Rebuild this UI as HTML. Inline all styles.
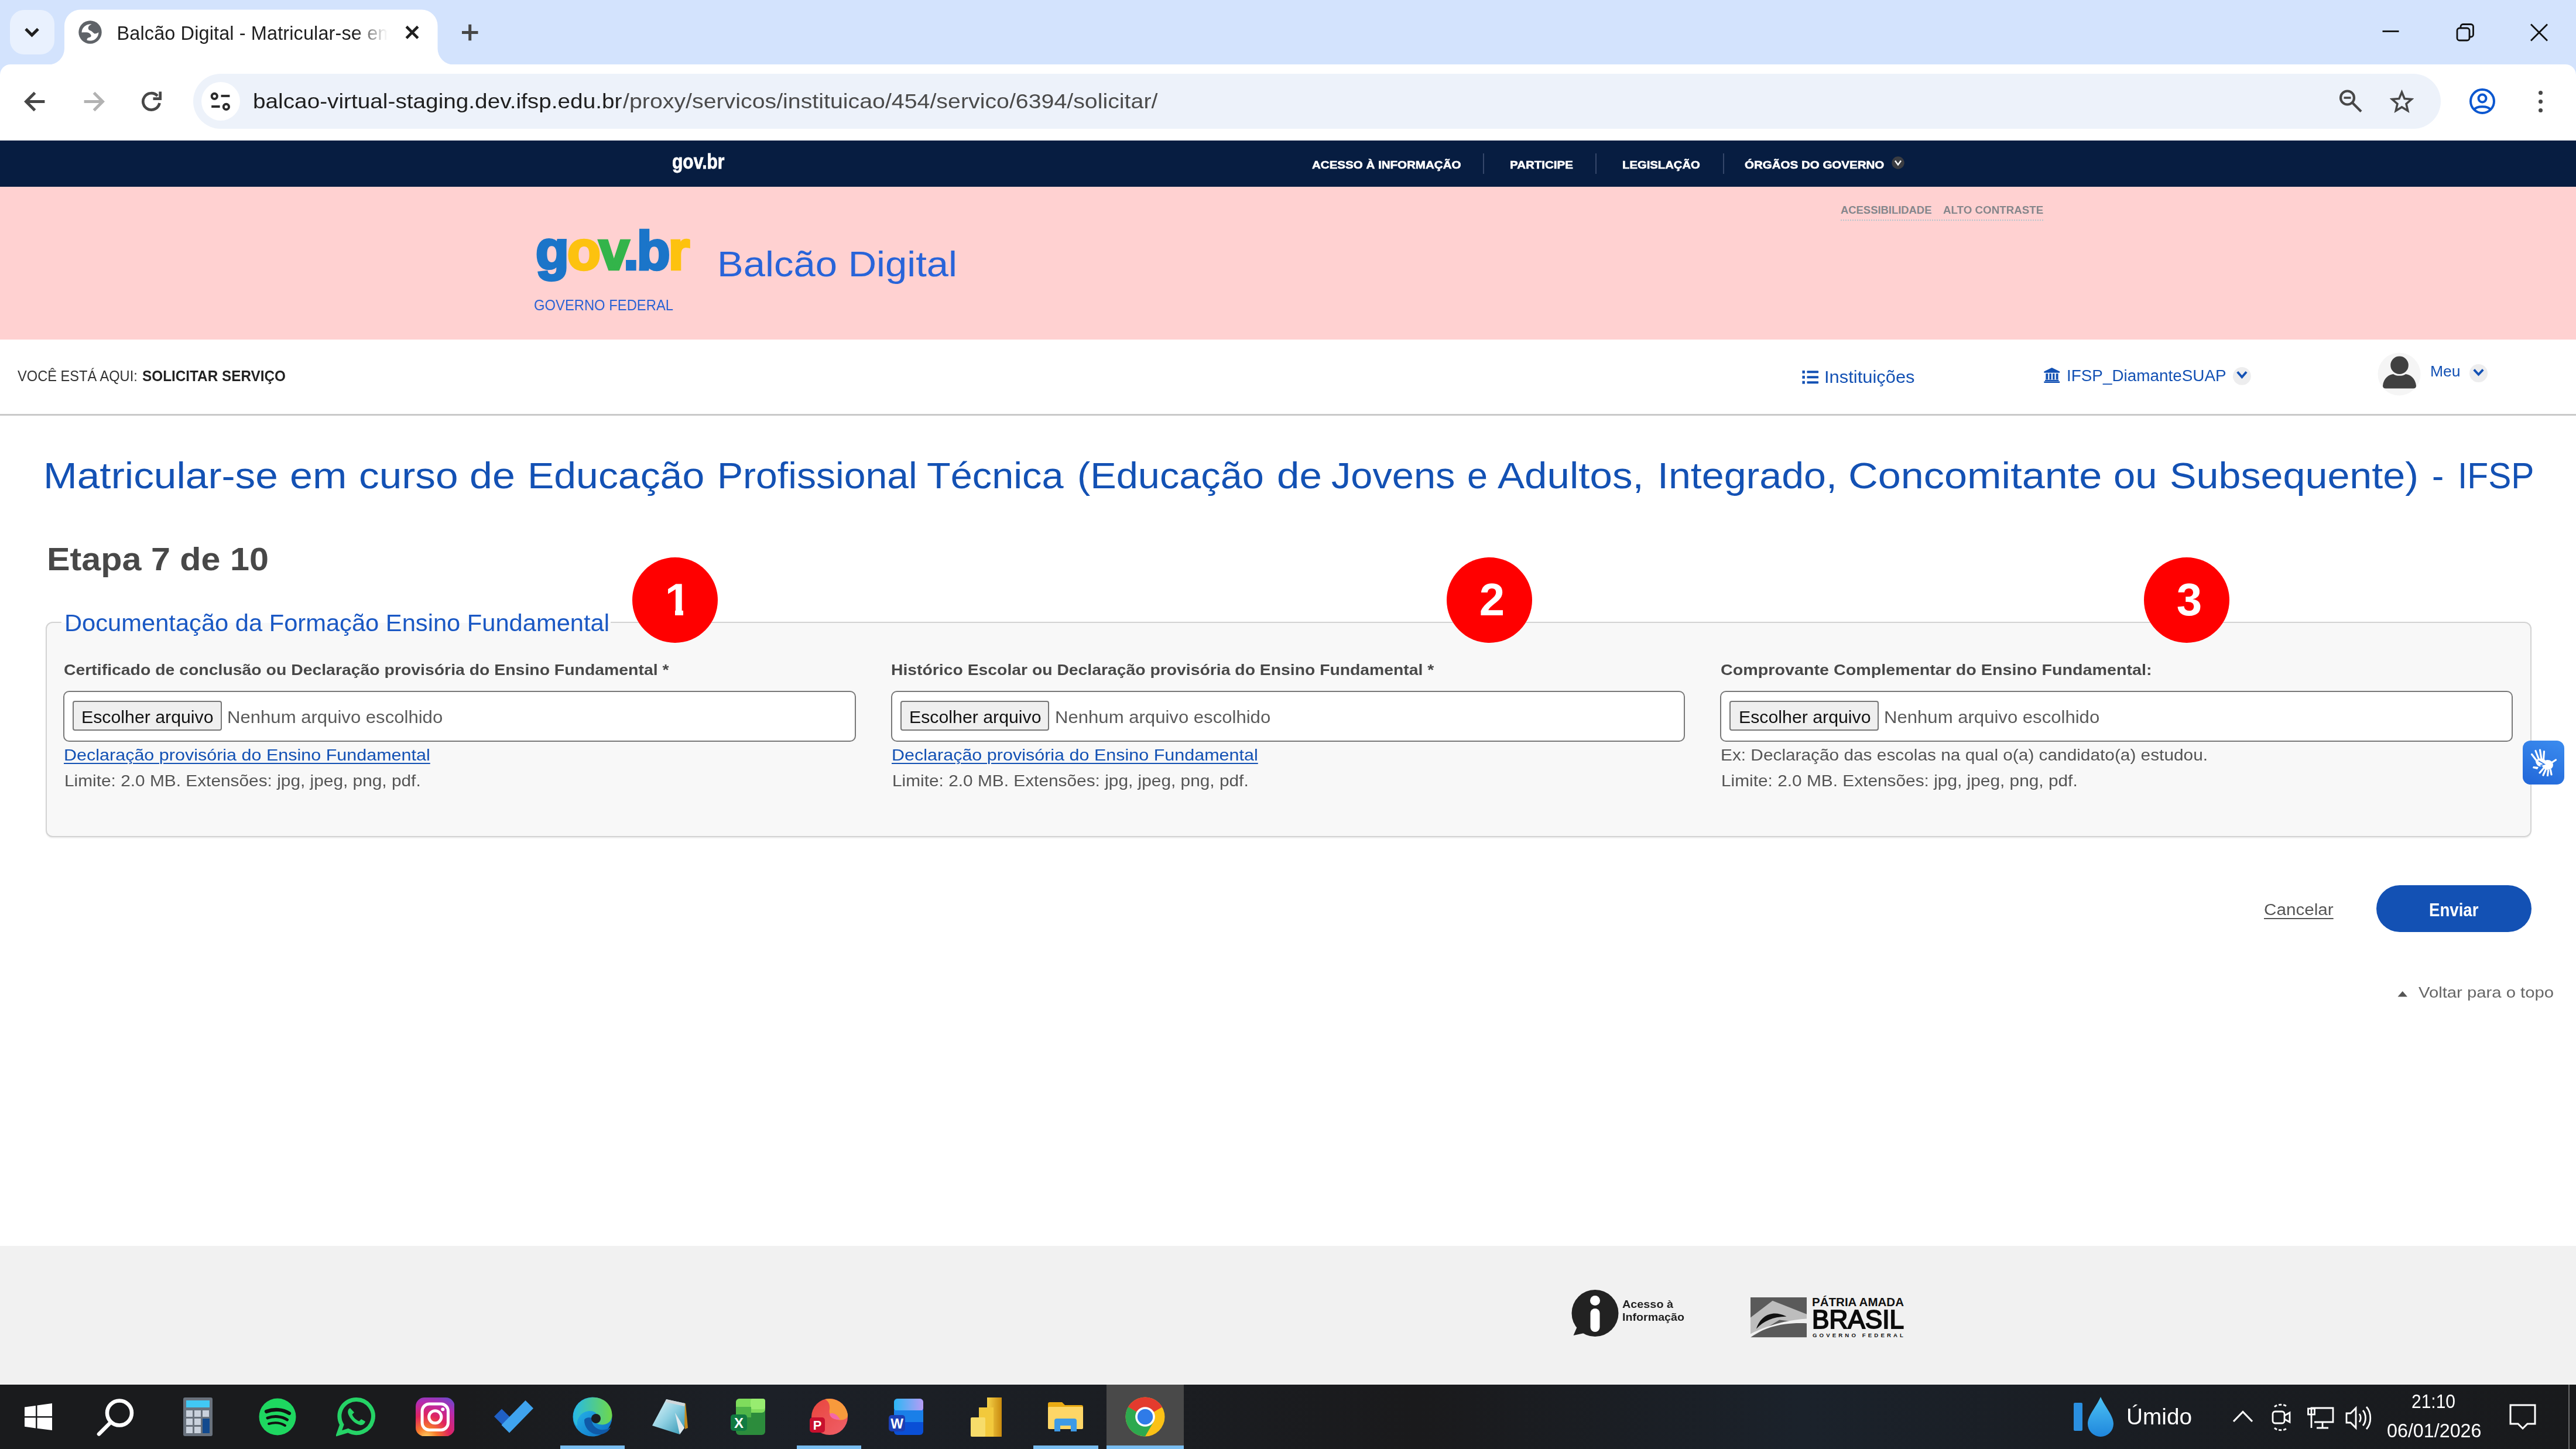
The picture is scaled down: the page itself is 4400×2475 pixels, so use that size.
<!DOCTYPE html>
<html lang="pt-BR"><head><meta charset="utf-8"><title>Balcão Digital - Matricular-se em curso</title>
<style>
html,body{margin:0;padding:0}
body{width:4400px;height:2475px;position:relative;overflow:hidden;background:#fff;font-family:"Liberation Sans",sans-serif}
.r,.a,.t{position:absolute;display:block}
.t{white-space:nowrap;line-height:1}
</style></head>
<body>
<!-- page -->
<div class="r" style="left:0px;top:240px;width:4400px;height:2124px;background:#fff;"></div>
<div class="r" style="left:0px;top:240px;width:4400px;height:78.5px;background:#071d41;"></div>
<span class="t" style="left:1148.0px;top:258.2px;font-size:35px;font-weight:700;color:#fff;transform-origin:0 0;transform:scaleX(0.8577);-webkit-text-stroke:0.8px #fff;">gov.br</span>
<span class="t" style="left:2241.0px;top:272.6px;font-size:18.8px;font-weight:700;color:#fff;transform-origin:0 0;transform:scaleX(1.0935);-webkit-text-stroke:0.6px #fff;">ACESSO À INFORMAÇÃO</span>
<span class="t" style="left:2579.0px;top:272.6px;font-size:18.8px;font-weight:700;color:#fff;transform-origin:0 0;transform:scaleX(1.0922);-webkit-text-stroke:0.6px #fff;">PARTICIPE</span>
<span class="t" style="left:2771.0px;top:272.6px;font-size:18.8px;font-weight:700;color:#fff;transform-origin:0 0;transform:scaleX(1.0791);-webkit-text-stroke:0.6px #fff;">LEGISLAÇÃO</span>
<span class="t" style="left:2980.0px;top:272.6px;font-size:18.8px;font-weight:700;color:#fff;transform-origin:0 0;transform:scaleX(1.0925);-webkit-text-stroke:0.6px #fff;">ÓRGÃOS DO GOVERNO</span>
<div class="r" style="left:2533px;top:261.5px;width:2px;height:35.0px;background:#35476a;"></div>
<div class="r" style="left:2725px;top:261.5px;width:2px;height:35.0px;background:#35476a;"></div>
<div class="r" style="left:2942.5px;top:261.5px;width:2.0px;height:35.0px;background:#35476a;"></div>
<svg class="a" style="left:3231.2px;top:266.7px" width="22" height="22" viewBox="0 0 22 22"><circle cx="11" cy="11" r="10.700" fill="#3b3d42"/><path d="M6 7.500 L11 14.500 L16 7.500" fill="none" stroke="#fff" stroke-width="2.400"/></svg>
<div class="r" style="left:0px;top:318.5px;width:4400px;height:261.5px;background:#ffd1d1;"></div>
<span class="t" style="left:3144.0px;top:349.9px;font-size:18.4px;font-weight:700;color:#85868b;letter-spacing:0.008px;">ACESSIBILIDADE</span>
<span class="t" style="left:3318.6px;top:349.9px;font-size:18.4px;font-weight:700;color:#85868b;transform-origin:0 0;transform:scaleX(1.0203);">ALTO CONTRASTE</span>
<div class="a" style="left:3144px;top:374.5px;width:346px;height:0;border-top:2.5px dotted #b5c5cd"></div>
<span class="t" style="left:915px;top:381.9px;font-size:93px;font-weight:700;letter-spacing:-2.86px;-webkit-text-stroke:4.5px currentColor"><span style="color:#1b75c9">g</span><span style="color:#fdc20f">o</span><span style="color:#33b44a">v</span><span style="color:#1b75c9">.</span><span style="color:#1b75c9">b</span><span style="color:#fdc20f">r</span></span>
<span class="t" style="left:912.0px;top:509.4px;font-size:25.5px;color:#2a62d4;transform-origin:0 0;transform:scaleX(0.9331);">GOVERNO FEDERAL</span>
<span class="t" style="left:1225.0px;top:420.0px;font-size:62px;color:#2864d9;transform-origin:0 0;transform:scaleX(1.0815);">Balcão Digital</span>
<div class="r" style="left:0px;top:706.5px;width:4400px;height:3.0px;background:#c9c9c9;"></div>
<span class="t" style="left:30.4px;top:629.7px;font-size:25px;color:#333;transform-origin:0 0;transform:scaleX(0.9450);">VOCÊ ESTÁ AQUI:</span>
<span class="t" style="left:243.0px;top:629.7px;font-size:25px;font-weight:700;color:#222;transform-origin:0 0;transform:scaleX(0.9727);">SOLICITAR SERVIÇO</span>
<svg class="a" style="left:3077px;top:632px" width="30.5" height="25" viewBox="0 0 31 28"><g fill="#1351b4"><rect x="0" y="1" width="5" height="5.500"/><rect x="0" y="11" width="5" height="5.500"/><rect x="0" y="21" width="5" height="5.500"/><rect x="9" y="1.500" width="22" height="4.500" rx="1"/><rect x="9" y="11.500" width="22" height="4.500" rx="1"/><rect x="9" y="21.500" width="22" height="4.500" rx="1"/></g></svg>
<span class="t" style="left:3116.0px;top:628.7px;font-size:29.5px;color:#1351b4;transform-origin:0 0;transform:scaleX(1.0469);">Instituições</span>
<svg class="a" style="left:3489.5px;top:628px" width="29.5" height="26" viewBox="0 0 31 30"><g fill="#1351b4"><path d="M15.500 0 L31 7.500 V10 H0 V7.500 Z"/><rect x="3.500" y="11.500" width="4.500" height="12"/><rect x="10.500" y="11.500" width="4" height="12"/><rect x="17" y="11.500" width="4" height="12"/><rect x="23.500" y="11.500" width="4.500" height="12"/><rect x="2" y="24" width="27" height="2.500"/><rect x="0" y="27" width="31" height="3"/></g></svg>
<span class="t" style="left:3529.6px;top:627.4px;font-size:28.2px;color:#1351b4;transform-origin:0 0;transform:scaleX(0.9889);">IFSP_DiamanteSUAP</span>
<svg class="a" style="left:3814.1px;top:627px" width="30.8" height="30.8" viewBox="0 0 30 30"><circle cx="15" cy="15" r="15" fill="#ededee"/><path d="M7.500 8 L15 16.500 L22.500 8" fill="none" stroke="#1351b4" stroke-width="3.800"/></svg>
<svg class="a" style="left:4061.3px;top:601.5px" width="74" height="74" viewBox="0 0 74 74"><circle cx="37" cy="37" r="36.5" fill="#f5f5f5"/><circle cx="37.5" cy="21.8" r="15.3" fill="#404040"/><path d="M9 57 C10 44 20 37.500 27 37 C32 40.800 43 40.800 48 37 C55 37.500 65 44 66 57 C66 60 64 61.500 61 61.500 H14 C11 61.500 9 60 9 57 Z" fill="#404040"/></svg>
<span class="t" style="left:4150.8px;top:621.1px;font-size:26.4px;color:#1351b4;transform-origin:0 0;transform:scaleX(1.0047);">Meu</span>
<svg class="a" style="left:4218px;top:622.3px" width="31" height="31" viewBox="0 0 28 28"><circle cx="14" cy="14" r="14" fill="#ededee"/><path d="M7 8.500 L14 16 L21 8.500" fill="none" stroke="#1351b4" stroke-width="3.500"/></svg>
<h1 class="a" style="left:74.1px;top:781.2px;margin:0;font-size:0;font-weight:400;color:#1351b4;line-height:0;white-space:nowrap"><span style="display:inline-block;width:421.4px;font-size:63.8px;line-height:1;transform-origin:0 0;transform:scaleX(1.0873)">Matricular-se</span> <span style="display:inline-block;width:117.5px;font-size:63.8px;line-height:1;transform-origin:0 0;transform:scaleX(1.0989)">em</span> <span style="display:inline-block;width:189.0px;font-size:63.8px;line-height:1;transform-origin:0 0;transform:scaleX(1.0864)">curso</span> <span style="display:inline-block;width:99.5px;font-size:63.8px;line-height:1;transform-origin:0 0;transform:scaleX(1.0963)">de</span> <span style="display:inline-block;width:323.5px;font-size:63.8px;line-height:1;transform-origin:0 0;transform:scaleX(1.0649)">Educação</span> <span style="display:inline-block;width:358.0px;font-size:63.8px;line-height:1;transform-origin:0 0;transform:scaleX(1.0361)">Profissional</span> <span style="display:inline-block;width:257.3px;font-size:63.8px;line-height:1;transform-origin:0 0;transform:scaleX(1.0452)">Técnica</span> <span style="display:inline-block;width:340.3px;font-size:63.8px;line-height:1;transform-origin:0 0;transform:scaleX(1.0455)">(Educação</span> <span style="display:inline-block;width:93.9px;font-size:63.8px;line-height:1;transform-origin:0 0;transform:scaleX(1.0822)">de</span> <span style="display:inline-block;width:231.9px;font-size:63.8px;line-height:1;transform-origin:0 0;transform:scaleX(1.0458)">Jovens</span> <span style="display:inline-block;width:52.1px;font-size:63.8px;line-height:1;transform-origin:0 0;transform:scaleX(0.9864)">e</span> <span style="display:inline-block;width:272.5px;font-size:63.8px;line-height:1;transform-origin:0 0;transform:scaleX(1.0831)">Adultos,</span> <span style="display:inline-block;width:326.1px;font-size:63.8px;line-height:1;transform-origin:0 0;transform:scaleX(1.0681)">Integrado,</span> <span style="display:inline-block;width:453.2px;font-size:63.8px;line-height:1;transform-origin:0 0;transform:scaleX(1.1010)">Concomitante</span> <span style="display:inline-block;width:95.7px;font-size:63.8px;line-height:1;transform-origin:0 0;transform:scaleX(1.0498)">ou</span> <span style="display:inline-block;width:448.3px;font-size:63.8px;line-height:1;transform-origin:0 0;transform:scaleX(1.0697)">Subsequente)</span> <span style="display:inline-block;width:43.5px;font-size:63.8px;line-height:1;transform-origin:0 0;transform:scaleX(0.9507)">-</span> <span style="display:inline-block;width:130.5px;font-size:63.8px;line-height:1;transform-origin:0 0;transform:scaleX(0.9202)">IFSP</span></h1>
<span class="t" style="left:80.4px;top:926.6px;font-size:56.4px;font-weight:700;color:#484848;transform-origin:0 0;transform:scaleX(1.0512);">Etapa 7 de 10</span>
<div class="a" style="left:77.5px;top:1062px;width:4242px;height:363.5px;border:2px solid #d3d3d3;border-radius:12px;background:#f8f8f8;box-shadow:0 1.5px 2px rgba(0,0,0,.06)"></div>
<div class="r" style="left:105px;top:1058px;width:938px;height:8px;background:#fff;"></div>
<div class="r" style="left:105px;top:1064px;width:938px;height:4px;background:#f8f8f8;"></div>
<span class="t" style="left:109.7px;top:1043.6px;font-size:40px;color:#1a58c4;transform-origin:0 0;transform:scaleX(1.0416);">Documentação da Formação Ensino Fundamental</span>
<span class="t" style="left:108.5px;top:1130.6px;font-size:26.2px;font-weight:700;color:#484848;transform-origin:0 0;transform:scaleX(1.0843);">Certificado de conclusão ou Declaração provisória do Ensino Fundamental *</span>
<div class="a" style="left:107.7px;top:1180px;width:1350.3px;height:83px;border:2px solid #787878;border-radius:10px;background:#fff"></div>
<div class="a" style="left:124.0px;top:1196.6px;width:250.6px;height:47.4px;border:2px solid #767676;border-radius:4px;background:#efefef"></div>
<span class="t" style="left:139.4px;top:1209.6px;font-size:29.6px;color:#111;transform-origin:0 0;transform:scaleX(1.0232);">Escolher arquivo</span>
<span class="t" style="left:388.0px;top:1209.6px;font-size:29.6px;color:#5a5a5a;transform-origin:0 0;transform:scaleX(1.0508);">Nenhum arquivo escolhido</span>
<span class="t" style="left:108.8px;top:1276.0px;font-size:27.5px;color:#1351b4;transform-origin:0 0;transform:scaleX(1.1094);text-decoration:underline;text-decoration-thickness:2px;text-underline-offset:4px;">Declaração provisória do Ensino Fundamental</span>
<span class="t" style="left:109.6px;top:1320.3px;font-size:27.5px;color:#555;transform-origin:0 0;transform:scaleX(1.0850);">Limite: 2.0 MB. Extensões: jpg, jpeg, png, pdf.</span>
<span class="t" style="left:1522.4px;top:1130.6px;font-size:26.2px;font-weight:700;color:#484848;transform-origin:0 0;transform:scaleX(1.0819);">Histórico Escolar ou Declaração provisória do Ensino Fundamental *</span>
<div class="a" style="left:1521.6px;top:1180px;width:1352.4px;height:83px;border:2px solid #787878;border-radius:10px;background:#fff"></div>
<div class="a" style="left:1537.9px;top:1196.6px;width:250.6px;height:47.4px;border:2px solid #767676;border-radius:4px;background:#efefef"></div>
<span class="t" style="left:1553.3px;top:1209.6px;font-size:29.6px;color:#111;transform-origin:0 0;transform:scaleX(1.0232);">Escolher arquivo</span>
<span class="t" style="left:1801.9px;top:1209.6px;font-size:29.6px;color:#5a5a5a;transform-origin:0 0;transform:scaleX(1.0508);">Nenhum arquivo escolhido</span>
<span class="t" style="left:1522.7px;top:1276.0px;font-size:27.5px;color:#1351b4;transform-origin:0 0;transform:scaleX(1.1094);text-decoration:underline;text-decoration-thickness:2px;text-underline-offset:4px;">Declaração provisória do Ensino Fundamental</span>
<span class="t" style="left:1523.5px;top:1320.3px;font-size:27.5px;color:#555;transform-origin:0 0;transform:scaleX(1.0850);">Limite: 2.0 MB. Extensões: jpg, jpeg, png, pdf.</span>
<span class="t" style="left:2938.7px;top:1130.6px;font-size:26.2px;font-weight:700;color:#484848;transform-origin:0 0;transform:scaleX(1.0958);">Comprovante Complementar do Ensino Fundamental:</span>
<div class="a" style="left:2937.9px;top:1180px;width:1350.6px;height:83px;border:2px solid #787878;border-radius:10px;background:#fff"></div>
<div class="a" style="left:2954.2px;top:1196.6px;width:250.6px;height:47.4px;border:2px solid #767676;border-radius:4px;background:#efefef"></div>
<span class="t" style="left:2969.6px;top:1209.6px;font-size:29.6px;color:#111;transform-origin:0 0;transform:scaleX(1.0232);">Escolher arquivo</span>
<span class="t" style="left:3218.2px;top:1209.6px;font-size:29.6px;color:#5a5a5a;transform-origin:0 0;transform:scaleX(1.0508);">Nenhum arquivo escolhido</span>
<span class="t" style="left:2939.0px;top:1276.0px;font-size:27.5px;color:#555;transform-origin:0 0;transform:scaleX(1.0842);">Ex: Declaração das escolas na qual o(a) candidato(a) estudou.</span>
<span class="t" style="left:2939.8px;top:1320.3px;font-size:27.5px;color:#555;transform-origin:0 0;transform:scaleX(1.0850);">Limite: 2.0 MB. Extensões: jpg, jpeg, png, pdf.</span>
<div class="a" style="left:1080px;top:952px;width:146px;height:146px;border-radius:50%;background:#ff0000"></div>
<span class="t" style="left:1135.8px;top:985.0px;font-size:78px;font-weight:700;color:#fff;">1</span>
<div class="r" style="left:1139px;top:1041.5px;width:14.299999999999955px;height:11.5px;background:#ff0000;"></div>
<div class="r" style="left:1167.3px;top:1041.5px;width:11.700000000000045px;height:11.5px;background:#ff0000;"></div>
<div class="a" style="left:2471px;top:952px;width:146px;height:146px;border-radius:50%;background:#ff0000"></div>
<span class="t" style="left:2526.8px;top:985.0px;font-size:78px;font-weight:700;color:#fff;">2</span>
<div class="a" style="left:3662px;top:952px;width:146px;height:146px;border-radius:50%;background:#ff0000"></div>
<span class="t" style="left:3717.8px;top:985.0px;font-size:78px;font-weight:700;color:#fff;">3</span>
<div class="a" style="left:4309.3px;top:1264.5px;width:71.2px;height:75px;border-radius:13px;background:linear-gradient(200deg,#3b8cef,#2166d8)"></div>
<svg class="a" style="left:4322px;top:1279px" width="45" height="47" viewBox="0 0 45 47"><g stroke="#fff" stroke-width="3.200" stroke-linecap="round" fill="none"><path d="M12 22 L2.500 9.500 M15 19 L9 3.500 M19 18 L16.500 2 M22.500 19 L23.500 4.500"/><path d="M22 34 L16 41 M26 36 L22 45 M30.500 37 L29.500 46 M34.500 36 L36 44 M36 24 L43.500 19"/></g><g fill="#fff"><path d="M9 20 C12 16 22 15 25 19 L25 25 L18 30 C13 31 9 26 9 20 Z"/><ellipse cx="29.500" cy="27.500" rx="9.500" ry="8.500"/><path d="M5 30 L14 31 L12 35 L4 33 Z"/></g><path d="M14 20.500 L24 26.500 L17 28.500" stroke="#2f7ae6" stroke-width="1.800" fill="none"/></svg>
<span class="t" style="left:3867.0px;top:1539.1px;font-size:28.2px;color:#555;transform-origin:0 0;transform:scaleX(1.0518);text-decoration:underline;text-decoration-thickness:2px;text-underline-offset:4.5px;">Cancelar</span>
<div class="r" style="left:4059px;top:1512px;width:264.60000000000036px;height:80px;background:#1351b4;border-radius:40px;"></div>
<span class="t" style="left:4149.0px;top:1539.2px;font-size:30.5px;font-weight:700;color:#fff;transform-origin:0 0;transform:scaleX(0.9062);">Enviar</span>
<svg class="a" style="left:4094.5px;top:1693px" width="17.5" height="9.5" viewBox="0 0 19 11"><path d="M0 11 L9.500 0 L19 11 Z" fill="#555"/></svg>
<span class="t" style="left:4131.0px;top:1683.1px;font-size:25.5px;color:#666;transform-origin:0 0;transform:scaleX(1.1474);">Voltar para o topo</span>
<div class="r" style="left:0px;top:2128px;width:4400px;height:236px;background:#f1f1f1;"></div>
<svg class="a" style="left:2682px;top:2202px" width="86" height="84" viewBox="0 0 86 84"><circle cx="42.500" cy="41" r="40" fill="#222"/><path d="M12 64 L5.500 79 L24 75 Z" fill="#222"/><circle cx="42.500" cy="19.500" r="8.500" fill="#fff"/><rect x="34.500" y="33" width="16" height="40" rx="8" fill="#fff"/></svg>
<span class="t" style="left:2770.6px;top:2220.2px;font-size:17.5px;font-weight:700;color:#222;transform-origin:0 0;transform:scaleX(1.1320);">Acesso à</span>
<span class="t" style="left:2770.6px;top:2242.2px;font-size:17.5px;font-weight:700;color:#222;transform-origin:0 0;transform:scaleX(1.1237);">Informação</span>
<svg class="a" style="left:2989.5px;top:2216.4px" width="96" height="68.2" viewBox="0 0 97 71" preserveAspectRatio="none"><rect width="97" height="71" fill="#5a5a5a"/><path d="M0 36 L38 6 L97 30 V46 L50 40 L0 71 Z" fill="#bdbdbd"/><path d="M10 56 C18 30 40 22 62 34 C40 34 22 42 10 56 Z" fill="#111"/><path d="M0 71 C25 52 60 44 97 46 V38 C60 40 25 52 0 65 Z" fill="#f1f1f1"/></svg>
<span class="t" style="left:3095.0px;top:2213.6px;font-size:20.5px;font-weight:700;color:#111;letter-spacing:0.020px;">PÁTRIA AMADA</span>
<span class="t" style="left:3095.0px;top:2232.7px;font-size:43.5px;color:#0c0c0c;transform-origin:0 0;transform:scaleX(1.0146);-webkit-text-stroke:2px #0c0c0c;">BRASIL</span>
<span class="t" style="left:3096.0px;top:2276.2px;font-size:9.6px;font-weight:700;color:#111;letter-spacing:4.137px;">GOVERNO FEDERAL</span>
<!-- chrome -->
<div class="r" style="left:0px;top:0px;width:4400px;height:132px;background:#d3e3fd;"></div>
<div class="r" style="left:16.5px;top:16.5px;width:76.5px;height:76.5px;background:#e9f1fe;border-radius:24px;"></div>
<svg class="a" style="left:36px;top:36px" width="38" height="38" viewBox="0 0 38 38"><path d="M8 13.5 L18.5 24 L29 13.5" fill="none" stroke="#1f1f1f" stroke-width="5"/></svg>
<div class="r" style="left:0px;top:110px;width:4400px;height:130px;background:#fff;border-radius:18px 18px 0 0;"></div>
<svg class="a" style="left:82px;top:16px" width="696" height="95" viewBox="82 16 696 95"><path d="M82.5 110.5 A27.5 27.5 0 0 0 110 83 V44 A27.5 27.5 0 0 1 137.5 16.5 H720 A27.5 27.5 0 0 1 747.5 44 V83 A27.5 27.5 0 0 0 775 110.5 Z" fill="#fff"/></svg>
<svg class="a" style="left:134.3px;top:34.8px" width="40" height="40" viewBox="0 0 40 40"><circle cx="20" cy="20" r="19.700" fill="#5f6368"/><path d="M22.400 6.400 C19.500 7.500 17.200 9 16.700 12.500 C16.500 15.500 18.500 17 21.500 17.800 C23.500 18.500 25 21.500 27.300 22.400 C30 23 32.500 21.500 34.400 20.300 C34.500 26 31 31 26.500 33.200 C22.500 35 17.500 34.800 14.500 33.500 C14 31 16 29.500 18.200 29 C21 28.500 22.300 27 21.500 25.300 C20.500 22.500 18 20.800 15.700 20.500 C12 20 8.500 20.300 5.600 20.500 C5.400 14 10.500 8.500 16 6.900 C18.500 6.200 20.500 6.100 22.400 6.400 Z" fill="#fff"/></svg>
<div class="a" style="left:199.5px;top:30px;width:462px;height:52px;overflow:hidden;-webkit-mask-image:linear-gradient(90deg,#000 0,#000 405px,transparent 462px);mask-image:linear-gradient(90deg,#000 0,#000 405px,transparent 462px)"><span class="t" style="left:0;top:10.8px;font-size:32.5px;color:#1f1f1f;letter-spacing:0.103px">Balcão Digital - Matricular-se em curso de Educação</span></div>
<svg class="a" style="left:689px;top:40px" width="30" height="30" viewBox="0 0 30 30"><path d="M5.200 5.500 L24.800 25.100 M24.800 5.500 L5.200 25.100" stroke="#1f1f1f" stroke-width="4.600" fill="none"/></svg>
<svg class="a" style="left:787px;top:40px" width="32" height="32" viewBox="0 0 32 32"><path d="M2 15.500 H29.500 M15.700 1.800 V29.300" stroke="#474747" stroke-width="5" fill="none"/></svg>
<svg class="a" style="left:4060px;top:30px" width="320" height="50" viewBox="0 0 320 50"><g fill="none" stroke="#111" stroke-width="2.800"><path d="M9.500 23.500 H37.500"/><rect x="137" y="18" width="21" height="21" rx="4"/><path d="M143 17 V15.500 a4 4 0 0 1 4 -4 H160.500 a4 4 0 0 1 4 4 V29 a4 4 0 0 1 -4 4 H159"/><path d="M263 11.500 L291 39.500 M291 11.500 L263 39.500"/></g></svg>
<svg class="a" style="left:39.1px;top:151.7px" width="43" height="43" viewBox="0 0 46 46"><path d="M40 23 H7 M22 7 L6 23 L22 39" fill="none" stroke="#474747" stroke-width="5.400"/></svg>
<svg class="a" style="left:138.1px;top:151.7px" width="43" height="43" viewBox="0 0 46 46"><path d="M6 23 H39 M24 7 L40 23 L24 39" fill="none" stroke="#b2b2b2" stroke-width="5.400"/></svg>
<svg class="a" style="left:236px;top:150px" width="46" height="46" viewBox="0 0 46 46"><g fill="none" stroke="#474747" stroke-width="4.700"><path d="M33 13.800 A14.200 14.200 0 1 0 36.500 26"/><path d="M25.500 18.600 H37.700 V6.500"/></g></svg>
<div class="r" style="left:330px;top:126px;width:3839px;height:94px;background:#edf2fa;border-radius:47px;"></div>
<div class="r" style="left:343.5px;top:140px;width:66.0px;height:66px;background:#fff;border-radius:33px;"></div>
<svg class="a" style="left:356px;top:152px" width="42" height="42" viewBox="0 0 42 42"><g fill="none" stroke="#2b2b2b" stroke-width="4"><circle cx="10.300" cy="12.300" r="4.600"/><path d="M21.500 11.900 H36.400"/><circle cx="30.400" cy="30.400" r="4.600"/><path d="M5.200 30 H19.600"/></g></svg>
<span class="t" style="left:432.0px;top:156.4px;font-size:35.8px;color:#1f1f1f;transform-origin:0 0;transform:scaleX(1.0826);">balcao-virtual-staging.dev.ifsp.edu.br</span>
<span class="t" style="left:1063.5px;top:156.4px;font-size:35.8px;color:#4b4b4b;transform-origin:0 0;transform:scaleX(1.0983);">/proxy/servicos/instituicao/454/servico/6394/solicitar/</span>
<svg class="a" style="left:3990px;top:148px" width="50" height="50" viewBox="0 0 50 50"><g fill="none" stroke="#474747" stroke-width="4.200"><circle cx="19.500" cy="19" r="11.500"/><path d="M28 27.500 L43 42.500"/><path d="M13.500 19 H25.500" stroke-width="3.600"/></g></svg>
<svg class="a" style="left:4082.4px;top:152.5px" width="41" height="41" viewBox="0 0 24 24"><path d="M12 2.600 L14.700 9.100 L21.700 9.700 L16.400 14.300 L18 21.200 L12 17.500 L6 21.200 L7.600 14.300 L2.300 9.700 L9.300 9.100 Z" fill="none" stroke="#474747" stroke-width="2.100" stroke-linejoin="miter"/></svg>
<svg class="a" style="left:4216px;top:149px" width="48" height="48" viewBox="0 0 48 48"><g fill="none" stroke="#0b57d0" stroke-width="4"><circle cx="24" cy="24" r="20"/><circle cx="24" cy="19" r="6.500"/><path d="M10.500 38 C14 31.500 34 31.500 37.500 38"/></g></svg>
<div class="r" style="left:4335.5px;top:154.5px;width:7.0px;height:7.0px;background:#474747;border-radius:4px;"></div>
<div class="r" style="left:4335.5px;top:169.7px;width:7.0px;height:7.0px;background:#474747;border-radius:4px;"></div>
<div class="r" style="left:4335.5px;top:184.9px;width:7.0px;height:7.0px;background:#474747;border-radius:4px;"></div>
<!-- taskbar -->
<div class="r" style="left:0px;top:2365px;width:4400px;height:110px;background:linear-gradient(90deg,#1a1b1d 0%,#1a1b1d 18%,#1c2027 30%,#1b1e23 42%,#1a1a1c 55%,#1b222b 70%,#1a1e24 80%,#191a1c 100%);"></div>
<div class="r" style="left:1889.5px;top:2365px;width:132.0px;height:110px;background:#494949;"></div>
<div class="r" style="left:957px;top:2469px;width:110px;height:6px;background:#79bdf0;"></div>
<div class="r" style="left:1360.5px;top:2469px;width:110.5px;height:6px;background:#79bdf0;"></div>
<div class="r" style="left:1765px;top:2469px;width:111px;height:6px;background:#79bdf0;"></div>
<div class="r" style="left:1889.5px;top:2469px;width:132.0px;height:6px;background:#79bdf0;"></div>
<svg class="a" style="left:42px;top:2397px" width="47" height="46" viewBox="0 0 47 46"><g fill="#fff"><path d="M0 6.500 L19 4 V22 H0 Z"/><path d="M21.500 3.600 L47 0 V22 H21.500 Z"/><path d="M0 24.500 H19 V42.500 L0 39.800 Z"/><path d="M21.500 24.500 H47 V46 L21.500 42.800 Z"/></g></svg>
<svg class="a" style="left:164px;top:2386px" width="68" height="68" viewBox="0 0 68 68"><g fill="none" stroke="#fff" stroke-width="6.500"><circle cx="40" cy="27.500" r="21"/><path d="M25.500 43 L5 63.500" stroke-linecap="round"/></g></svg>
<svg class="a" style="left:313px;top:2387px" width="50" height="66" viewBox="0 0 50 66"><rect x="0" y="0" width="50" height="66" rx="3" fill="#69727d"/><rect x="5" y="5" width="40" height="12" fill="#41c8f4"/><rect x="5" y="22" width="11" height="11" fill="#c9d1dc"/><rect x="19" y="22" width="11" height="11" fill="#c9d1dc"/><rect x="33" y="22" width="11" height="11" fill="#c9d1dc"/><rect x="5" y="36" width="11" height="11" fill="#c9d1dc"/><rect x="19" y="36" width="11" height="11" fill="#c9d1dc"/><rect x="5" y="50" width="11" height="11" fill="#c9d1dc"/><rect x="19" y="50" width="11" height="11" fill="#c9d1dc"/><rect x="33" y="36" width="12" height="25" fill="#124a8e"/></svg>
<svg class="a" style="left:441.5px;top:2388px" width="64" height="64" viewBox="0 0 64 64"><circle cx="32" cy="32" r="31.500" fill="#1ed760"/><g fill="none" stroke="#111" stroke-linecap="round"><path d="M13 23 C26 18 41 19 52 26" stroke-width="6.200"/><path d="M15 34 C26 30 39 31 48.500 37" stroke-width="5"/><path d="M17 44 C27 41 37 42 45 47" stroke-width="4"/></g></svg>
<svg class="a" style="left:574px;top:2386px" width="68" height="68" viewBox="0 0 68 68"><path d="M35 4.500 A28.500 28.500 0 1 1 20.500 57.600 L4.500 62.500 L9.800 47.500 A28.500 28.500 0 0 1 35 4.500 Z" fill="none" stroke="#25d366" stroke-width="7"/><path d="M24 19 C20 21 19 26 22 32 C26 40 33 46 41 48 C45 49 49 46 50 42 L43 38 L39.500 41.500 C34 39.500 29.500 35 27.500 30 L31 26.500 Z" fill="#25d366"/></svg>
<svg class="a" style="left:709.5px;top:2386.5px" width="66.5" height="66.5" viewBox="0 0 66 66"><defs><radialGradient id="ig" cx="0.28" cy="1.05" r="1.25"><stop offset="0" stop-color="#fedc6a"/><stop offset="0.22" stop-color="#f77a2a"/><stop offset="0.48" stop-color="#e0235f"/><stop offset="0.75" stop-color="#b62bb0"/><stop offset="1" stop-color="#5b4fd0"/></radialGradient></defs><rect width="66" height="66" rx="15" fill="url(#ig)"/><g fill="none" stroke="#fff" stroke-width="5"><rect x="11" y="11" width="44" height="44" rx="12"/><circle cx="33" cy="33" r="10.500"/></g><circle cx="46" cy="20" r="3" fill="#fff"/></svg>
<svg class="a" style="left:843px;top:2391px" width="69" height="58" viewBox="0 0 69 58"><path d="M1 28.500 L14 15.500 L38 39.500 L25 52.500 Z" fill="#1f5fc4"/><path d="M54.500 1 L68 14.500 L27 56.500 L13.500 43 Z" fill="#3fa3ee"/></svg>
<svg class="a" style="left:977.5px;top:2386px" width="68" height="68" viewBox="0 0 68 68"><defs><linearGradient id="e1" x1="0" y1="0" x2="1" y2="1"><stop offset="0" stop-color="#2bc3f0"/><stop offset="1" stop-color="#0c6cc4"/></linearGradient><linearGradient id="e2" x1="0" y1="0" x2="1" y2="0"><stop offset="0" stop-color="#27b9e6"/><stop offset="1" stop-color="#6fd84a"/></linearGradient></defs><circle cx="34" cy="34" r="33.500" fill="url(#e1)"/><path d="M2 28 C6 10 22 0 38 1 C56 2 68 16 67.500 32 C67 44 56 49 46 47 C40 46 38 42 41 38 C45 32 40 24 30 24 C16 24 6 36 8 50 C2 44 0 36 2 28 Z" fill="url(#e2)"/><path d="M20 40 C20 54 32 66 48 64 C56 63 62 58 65 52 C58 57 46 58 39 52 C33 47 32 40 34 36 C28 34 20 36 20 40 Z" fill="#0f5aa8"/><circle cx="40" cy="37" r="8" fill="#1b1d21"/></svg>
<svg class="a" style="left:1113px;top:2389px" width="63" height="62" viewBox="0 0 63 62"><defs><linearGradient id="np" x1="0" y1="0" x2="1" y2="1"><stop offset="0" stop-color="#e8f7fb"/><stop offset="0.500" stop-color="#8fd0e2"/><stop offset="1" stop-color="#2f93b0"/></linearGradient></defs><path d="M58 8 L62 50 L57 52 L52 10 Z" fill="#c48a1c"/><path d="M25 1 L57 8 L56 50 L48 61 L1 46 Z" fill="url(#np)"/><path d="M40 24 L56 50 L48 61 Z" fill="#dfe9ee"/><path d="M25 1 L57 8 L56 13 L24 6 Z" fill="#cfd6da"/></svg>
<svg class="a" style="left:1248px;top:2388.5px" width="59" height="62" viewBox="0 0 59 62"><rect x="9" y="0" width="50" height="62" rx="6" fill="#2c8c3c"/><rect x="9" y="0" width="50" height="24" rx="6" fill="#7fdc5c"/><rect x="34" y="0" width="25" height="18" rx="4" fill="#98ec70"/><rect x="9" y="14" width="26" height="18" fill="#4fb548"/><rect x="0" y="27" width="28" height="28" rx="5" fill="#117a41"/><text x="14" y="50" font-family="Liberation Sans,sans-serif" font-weight="700" font-size="24" fill="#fff" text-anchor="middle">X</text></svg>
<svg class="a" style="left:1383px;top:2388.5px" width="65" height="62" viewBox="0 0 65 62"><defs><linearGradient id="pp" x1="0" y1="0" x2="1" y2="1"><stop offset="0" stop-color="#e8453c"/><stop offset="1" stop-color="#f0606a"/></linearGradient></defs><circle cx="34" cy="31" r="31" fill="url(#pp)"/><path d="M26 1 C44 -3 62 8 65 27 C66 34 58 38 48 36 C38 34 32 28 34 18 C35 10 32 4 26 1 Z" fill="#f79a3c"/><path d="M34 26 C40 22 48 28 52 36 C42 36 35 33 34 26 Z" fill="#f468a8"/><rect x="0" y="32" width="26" height="26" rx="5" fill="#c8102e"/><text x="13" y="53" font-family="Liberation Sans,sans-serif" font-weight="700" font-size="22" fill="#fff" text-anchor="middle">P</text></svg>
<svg class="a" style="left:1518px;top:2388.5px" width="59" height="62" viewBox="0 0 59 62"><defs><linearGradient id="wd" x1="0" y1="0" x2="1" y2="0"><stop offset="0" stop-color="#2bb7f5"/><stop offset="1" stop-color="#b79cf5"/></linearGradient></defs><rect x="9" y="0" width="50" height="62" rx="6" fill="#0a4fd6"/><rect x="9" y="0" width="50" height="22" rx="6" fill="url(#wd)"/><rect x="9" y="20" width="50" height="20" fill="#1a7fe8"/><rect x="0" y="28" width="28" height="28" rx="5" fill="#1b3fb5"/><text x="14" y="51" font-family="Liberation Sans,sans-serif" font-weight="700" font-size="23" fill="#fff" text-anchor="middle">W</text></svg>
<svg class="a" style="left:1658px;top:2386.5px" width="53" height="67" viewBox="0 0 53 67"><defs><linearGradient id="pb" x1="0" y1="0" x2="1" y2="0"><stop offset="0" stop-color="#f6d34a"/><stop offset="1" stop-color="#c98a0e"/></linearGradient></defs><rect x="28" y="0" width="25" height="67" fill="url(#pb)"/><rect x="14" y="17" width="25" height="50" fill="#f2c93c"/><rect x="0" y="34" width="25" height="33" rx="2" fill="#f7dc6a"/></svg>
<svg class="a" style="left:1790px;top:2395px" width="60" height="50" viewBox="0 0 60 50"><path d="M0 3 a3 3 0 0 1 3 -3 H24 L29 5 H57 a3 3 0 0 1 3 3 V44 H0 Z" fill="#e9aa13"/><rect x="0" y="8" width="60" height="38" rx="2" fill="#fdd667"/><path d="M11 50 V32 a4 4 0 0 1 4 -4 H45 a4 4 0 0 1 4 4 V50 H39 V40 H21 V50 Z" fill="#3d9ae6"/></svg>
<svg class="a" style="left:1921.5px;top:2386px" width="68" height="68" viewBox="0 0 68 68"><circle cx="34" cy="34" r="33.500" fill="#fbc116"/><path d="M34 34 L5 17.300 A33.500 33.500 0 0 1 63 17.300 Z" fill="#e33b2e"/><path d="M34 34 L63 17.300 L5 17.300 Z" fill="#e33b2e"/><path d="M5 17.300 A33.500 33.500 0 0 0 34 67.500 L48.500 42.400 L34 34 Z" fill="#2da94f"/><path d="M34 34 L19.500 42.400 L34 67.500 Z" fill="#2da94f"/><circle cx="34" cy="34" r="16.800" fill="#fff"/><circle cx="34" cy="34" r="13.200" fill="#2f7be8"/></svg>
<div class="r" style="left:3541.5px;top:2395.5px;width:15.0px;height:48.5px;background:#2a8fe0;border-radius:2px;"></div>
<svg class="a" style="left:3566px;top:2386px" width="44" height="68" viewBox="0 0 44 68"><defs><linearGradient id="dr" x1="0" y1="0" x2="0" y2="1"><stop offset="0" stop-color="#4cc2f4"/><stop offset="1" stop-color="#1f86dc"/></linearGradient></defs><path d="M22 0 C30 18 44 32 44 46 A22 22 0 0 1 0 46 C0 32 14 18 22 0 Z" fill="url(#dr)"/></svg>
<span class="t" style="left:3631.8px;top:2400.0px;font-size:39px;color:#fff;transform-origin:0 0;transform:scaleX(0.9938);">Úmido</span>
<svg class="a" style="left:3813px;top:2408px" width="36" height="22" viewBox="0 0 36 22"><path d="M2 20 L18 3.500 L34 20" fill="none" stroke="#fff" stroke-width="3.200"/></svg>
<svg class="a" style="left:3880px;top:2397px" width="36" height="48" viewBox="0 0 36 48"><g fill="none" stroke="#fff" stroke-width="2.800"><rect x="2" y="14" width="20" height="20" rx="4"/><path d="M22 21 L31 16 V32 L22 27"/><path d="M5 6 C10 1 22 1 27 6" stroke-dasharray="5 3"/><path d="M5 42 C10 47 22 47 27 42" stroke-dasharray="5 3"/></g></svg>
<svg class="a" style="left:3941px;top:2403px" width="46" height="38" viewBox="0 0 46 38"><g fill="none" stroke="#fff" stroke-width="2.800"><path d="M7 13 V2 H44 V26 H12"/><rect x="1.500" y="3" width="11" height="10"/><path d="M7 13 V36 M16 36 H36 M26 26 V36"/></g></svg>
<svg class="a" style="left:4006px;top:2400px" width="46" height="44" viewBox="0 0 46 44"><g fill="none" stroke="#fff" stroke-width="2.800"><path d="M2 14 H9 L18 5 V39 L9 30 H2 Z"/><path d="M24 15 C27 19 27 25 24 29"/><path d="M30 9 C36 16 36 28 30 35"/><path d="M36 3 C45 13 45 31 36 41"/></g></svg>
<span class="t" style="left:4119.0px;top:2377.1px;font-size:33px;color:#fff;transform-origin:0 0;transform:scaleX(0.9082);">21:10</span>
<span class="t" style="left:4077.0px;top:2427.1px;font-size:33px;color:#fff;transform-origin:0 0;transform:scaleX(0.9778);">06/01/2026</span>
<svg class="a" style="left:4286px;top:2398px" width="46" height="46" viewBox="0 0 46 46"><path d="M2 2 H44 V34 H31 L23 42 L15 34 H2 Z" fill="none" stroke="#fff" stroke-width="3"/></svg>
<div class="r" style="left:4387px;top:2365px;width:2px;height:110px;background:#6a6a6a;"></div>
</body></html>
